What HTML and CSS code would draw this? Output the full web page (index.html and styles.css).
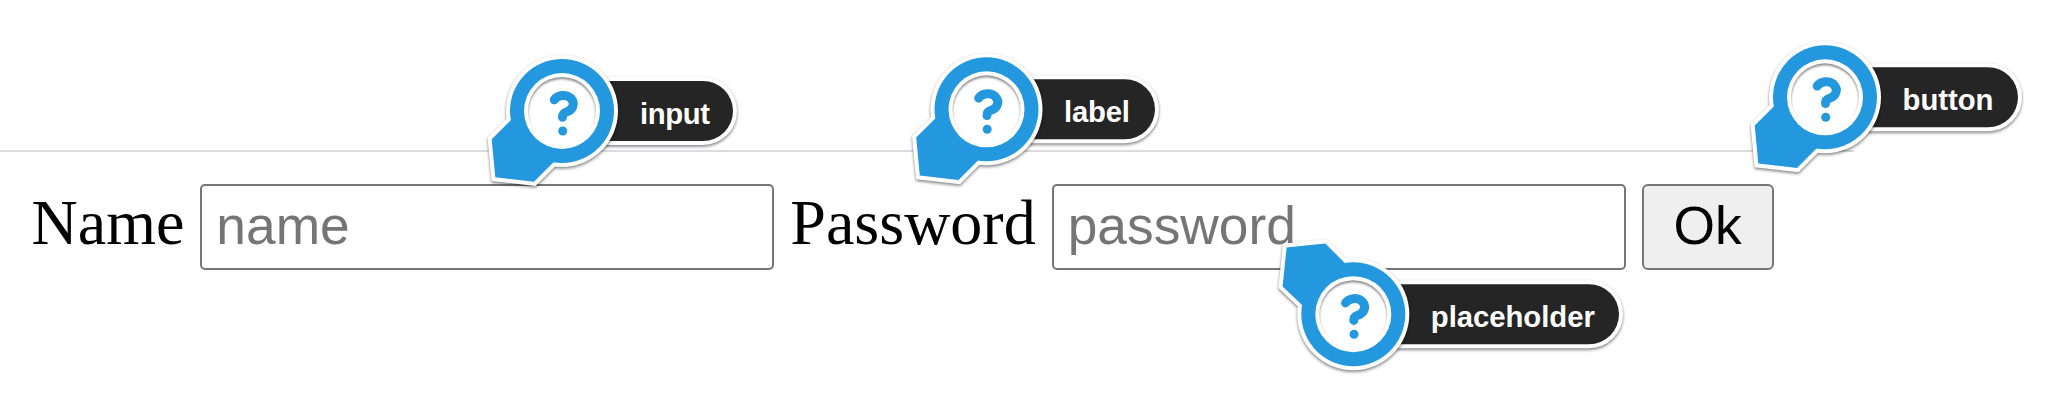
FILE: index.html
```html
<!DOCTYPE html>
<html lang="en">
<head>
<meta charset="utf-8">
<title>Form accessibility</title>
<link rel="stylesheet" href="styles.css">
</head>
<body>
<svg class="defs" aria-hidden="true">
  <defs>
    <filter id="shadow" x="-20%" y="-20%" width="140%" height="150%" color-interpolation-filters="sRGB">
      <feDropShadow dx="0" dy="1.6" stdDeviation="1.4" flood-color="#000" flood-opacity=".5"/>
    </filter>
    <filter id="inner" x="-10%" y="-10%" width="120%" height="120%" color-interpolation-filters="sRGB">
      <feOffset dy="1.6"/>
      <feGaussianBlur stdDeviation="1.2" result="b"/>
      <feComposite in="SourceGraphic" in2="b" operator="out" result="edge"/>
      <feFlood flood-color="#000" flood-opacity=".45"/>
      <feComposite in2="edge" operator="in" result="tint"/>
      <feMerge><feMergeNode in="SourceGraphic"/><feMergeNode in="tint"/></feMerge>
    </filter>
    <g id="face">
      <circle r="38" fill="#fff"/>
      <circle r="34" fill="#fff" filter="url(#inner)"/>
      <path d="M-7.8 -11.2C-4.5 -16.6 4.5 -16.8 8.6 -13C14 -7.5 10.5 -.8 4.5 1C1.2 2.1 .5 3 .5 6.2" fill="none" stroke="#2398df" stroke-width="9" stroke-linecap="round"/>
      <circle cx=".7" cy="20" r="4.5" fill="#2398df"/>
    </g>
    <g id="marker">
      <g filter="url(#shadow)">
        <circle r="56" fill="#fff"/>
        <path d="M-51 9L-70.3 28.3L-66.7 66.3L-28 70.7L-8.5 51.3L0 0Z" fill="#fff" stroke="#fff" stroke-width="8"/>
      </g>
      <circle r="52" fill="#2398df"/>
      <path d="M-51 9L-70.3 28.3L-66.7 66.3L-28 70.7L-8.5 51.3L0 0Z" fill="#2398df"/>
      <use href="#face"/>
    </g>
    <g id="marker-up">
      <g filter="url(#shadow)">
        <circle r="56" fill="#fff"/>
        <path d="M-51 -9L-70.7 -27.7L-66.7 -66.7L-28 -70.7L-8.5 -51.3L0 0Z" fill="#fff" stroke="#fff" stroke-width="8"/>
      </g>
      <circle r="52" fill="#2398df"/>
      <path d="M-51 -9L-70.7 -27.7L-66.7 -66.7L-28 -70.7L-8.5 -51.3L0 0Z" fill="#2398df"/>
      <use href="#face"/>
    </g>
  </defs>
</svg>
<form class="form">
  <label class="label" for="name">Name</label>
  <input class="field" id="name" type="text" placeholder="name">
  <label class="label" for="password">Password</label>
  <input class="field" id="password" type="text" placeholder="password">
  <button class="ok" type="button">Ok</button>
</form>
<svg class="notes" viewBox="0 0 2064 412">
  <g transform="translate(562 111)">
    <rect class="pill" x="-32" y="-32" width="205" height="64" rx="32"/>
    <rect class="pill-fill" x="-30" y="-30" width="201" height="60" rx="30"/>
    <text class="tag" x="78" y="12.6" textLength="70">input</text>
    <use href="#marker"/>
  </g>
  <g transform="translate(986.5 109.3)">
    <rect class="pill" x="-32" y="-32" width="202.5" height="64" rx="32"/>
    <rect class="pill-fill" x="-30" y="-30" width="198.5" height="60" rx="30"/>
    <text class="tag" x="77.5" y="12.6" textLength="66">label</text>
    <use href="#marker"/>
  </g>
  <g transform="translate(1825 97.3)">
    <rect class="pill" x="-32" y="-32" width="227" height="64" rx="32"/>
    <rect class="pill-fill" x="-30" y="-30" width="223" height="60" rx="30"/>
    <text class="tag" x="77.5" y="12.6" textLength="91">button</text>
    <use href="#marker"/>
  </g>
  <g transform="translate(1353.3 314.2)">
    <rect class="pill" x="-32" y="-32" width="299.7" height="64" rx="32"/>
    <rect class="pill-fill" x="-30" y="-30" width="295.7" height="60" rx="30"/>
    <text class="tag" x="77.5" y="12.6" textLength="164">placeholder</text>
    <use href="#marker-up"/>
  </g>
</svg>
</body>
</html>
```
FILE: styles.css
```css
body {
  margin: 0;
  padding-top: 150px;
  width: 2064px;
  height: 412px;
  box-sizing: border-box;
  overflow: hidden;
  background: #fff;
  color: #000;
}
.defs {
  position: absolute;
  width: 0;
  height: 0;
}
.form {
  display: flex;
  align-items: flex-start;
  gap: 16px;
  width: 1854px;
  box-sizing: border-box;
  padding: 32px 0 0 31.5px;
  border-top: 2px solid #dcdce0;
}
.label {
  font: 64px/74px "Liberation Serif", serif;
  margin-top: 2px;
  white-space: nowrap;
}
.field {
  box-sizing: border-box;
  flex: none;
  width: 574px;
  height: 86px;
  margin: 0;
  padding: 0 14px 4px;
  border: 2px solid #767676;
  border-radius: 5px;
  background: #fff;
  font: 53.33px "Liberation Sans", sans-serif;
}
.field::placeholder {
  color: #757575;
}
.ok {
  box-sizing: border-box;
  flex: none;
  width: 132px;
  height: 86px;
  padding: 0 0 4px;
  border: 2px solid #767676;
  border-radius: 6px;
  background: #efefef;
  color: #000;
  font: 53.33px "Liberation Sans", sans-serif;
}
.notes {
  position: absolute;
  left: 0;
  top: 0;
  width: 2064px;
  height: 412px;
  pointer-events: none;
}
.pill {
  fill: #fff;
  stroke: #fff;
  stroke-width: 4px;
  filter: url(#shadow);
}
.pill-fill {
  fill: #252525;
}
.tag {
  fill: #fff;
  font: bold 29.3px "Liberation Sans", sans-serif;
}
```
